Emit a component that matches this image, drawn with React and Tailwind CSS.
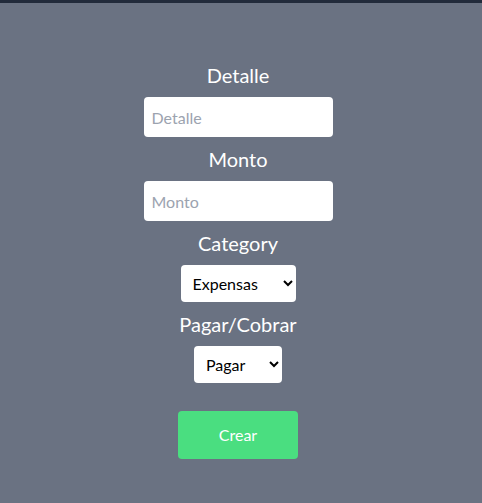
export default function App() {
    return (
        <div className="min-h-[503px] bg-gray-500 border-t-[3px] border-[#222b3b] font-['Lato','Liberation_Sans',sans-serif]">
            <form className="flex flex-col items-center pt-[50px] pr-[6px]" onSubmit={(e) => e.preventDefault()}>
                <label className="text-xl leading-7 text-white my-2">Detalle</label>
                <input
                    type="text"
                    placeholder="Detalle"
                    className="w-[189px] h-10 rounded bg-white px-2 text-base text-black placeholder:text-[#9ca3af] outline-none"
                />
                <label className="text-xl leading-7 text-white my-2">Monto</label>
                <input
                    type="text"
                    placeholder="Monto"
                    className="w-[189px] h-10 rounded bg-white px-2 text-base text-black placeholder:text-[#9ca3af] outline-none"
                />
                <label className="text-xl leading-7 text-white my-2">Category</label>
                <select className="w-[115px] h-[37px] rounded bg-white pl-2 pr-1 text-base text-black outline-none">
                    <option>Expensas</option>
                    <option>Ingresos</option>
                </select>
                <label className="text-xl leading-7 text-white my-2">Pagar/Cobrar</label>
                <select className="w-[88px] h-[37px] rounded bg-white pl-2 pr-1 text-base text-black outline-none">
                    <option>Pagar</option>
                    <option>Cobrar</option>
                </select>
                <button
                    type="submit"
                    className="mt-7 w-[120px] h-12 rounded bg-[#4ade80] text-white text-base"
                >
                    Crear
                </button>
            </form>
        </div>
    );
}
